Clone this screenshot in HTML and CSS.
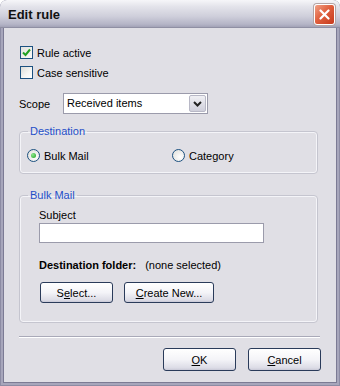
FILE: index.html
```html
<!DOCTYPE html>
<html lang="en">
<head>
<meta charset="UTF-8">
<meta name="viewport" content="width=device-width, initial-scale=1.0">
<title>Edit rule</title>
<link rel="stylesheet" href="styles.css">
</head>

<body>
<div class="window">
    <div class="titlebar">
        <span class="title">Edit rule</span>
        <button class="close" title="Close">
            <svg width="11" height="11" viewBox="0 0 11 11">
                <path d="M1.5 1.5 L9.5 9.5 M9.5 1.5 L1.5 9.5" stroke="#fff" stroke-width="2.2" stroke-linecap="round"/>
            </svg>
        </button>
    </div>

    <div class="client">
        <label class="check">
            <span class="box checked">
                <svg width="9" height="9" viewBox="0 0 9 9">
                    <path d="M1 4.5 L3.5 7 L8 1.5" fill="none" stroke="#21a121" stroke-width="2"/>
                </svg>
            </span>
            Rule active
        </label>
        <label class="check">
            <span class="box"></span>
            Case sensitive
        </label>

        <div class="scope">
            <span class="scope-label">Scope</span>
            <div class="combo">
                <span class="combo-text">Received items</span>
                <span class="combo-btn">
                    <svg width="9" height="6" viewBox="0 0 9 6">
                        <path d="M1 1 L4.5 4.5 L8 1" fill="none" stroke="#222" stroke-width="2"/>
                    </svg>
                </span>
            </div>
        </div>

        <fieldset class="group dest">
            <legend>Destination</legend>
            <div class="radios">
                <label class="radio"><span class="dot on"></span>Bulk Mail</label>
                <label class="radio"><span class="dot"></span>Category</label>
            </div>
        </fieldset>

        <fieldset class="group bulk">
            <legend>Bulk Mail</legend>
            <div class="field-label">Subject</div>
            <div class="textbox"></div>
            <div class="folder">
                <b>Destination folder:</b>
                <span>(none selected)</span>
            </div>
            <div class="buttons">
                <button class="btn">S<u>e</u>lect...</button>
                <button class="btn btn-wide"><u>C</u>reate New...</button>
            </div>
        </fieldset>

        <div class="separator"></div>

        <div class="footer">
            <button class="btn btn-dlg"><u>O</u>K</button>
            <button class="btn btn-dlg"><u>C</u>ancel</button>
        </div>
    </div>
</div>
</body>
</html>
```

FILE: styles.css
```css
body {
    margin: 0;
    background: #fff;
    font-family: "Liberation Sans", Arial, sans-serif;
    font-size: 11px;
    color: #000;
}
.window {
    width: 340px;
    height: 386px;
    box-sizing: border-box;
    display: flex;
    flex-direction: column;
    border-radius: 7px 7px 0 0;
    overflow: hidden;
    background: #a7a6bb;
    padding: 0 3px 3px 3px;
    box-shadow: inset 0 0 0 1px #8d8ca4;
}
.titlebar {
    height: 28px;
    margin: 0 -3px;
    padding: 0 5px 0 8px;
    display: flex;
    align-items: center;
    justify-content: space-between;
    background: linear-gradient(#f6f6f9, #e3e3ea 25%, #cfcfdb 60%, #b4b4c6 90%, #a2a2b6);
    border-bottom: 1px solid #8f8fa3;
    box-sizing: border-box;
}
.title {
    font-size: 13px;
    font-weight: bold;
    color: #111;
    margin-top: 2px;
}
.close {
    width: 21px;
    height: 21px;
    padding: 0;
    border: 1px solid #fff;
    border-radius: 3px;
    background: linear-gradient(135deg, #f1a186, #e0603e 45%, #c63a1c);
    display: flex;
    align-items: center;
    justify-content: center;
    box-shadow: 0 0 0 1px #b4a4a4;
    margin-top: 1px;
}
.client {
    flex: 1;
    background: #e0dfe5;
    padding: 18px 18px 0 15px;
    border-left: 1px solid #7c7b94;
    border-right: 1px solid #7c7b94;
    border-bottom: 1px solid #7c7b94;
}
.check {
    display: flex;
    align-items: center;
    gap: 4px;
    height: 13px;
    margin-bottom: 7px;
    margin-left: 1px;
}
.box {
    width: 11px;
    height: 11px;
    border: 1px solid #1c5180;
    background: linear-gradient(135deg, #dcdcd7, #f7f7f5 60%, #fff);
    display: flex;
    align-items: center;
    justify-content: center;
}
.box.checked {
    background: linear-gradient(135deg, #e2e2dd, #fafaf8);
}
.scope {
    display: flex;
    align-items: center;
    margin-top: 14px;
}
.scope-label {
    width: 44px;
}
.combo {
    display: flex;
    width: 143px;
    height: 19px;
    border: 1px solid #9b9bab;
    background: #fff;
}
.combo-text {
    flex: 1;
    padding-left: 3px;
    line-height: 19px;
}
.combo-btn {
    width: 15px;
    margin: 1px;
    border: 1px solid #b8b8c6;
    border-radius: 2px;
    background: linear-gradient(#f0f0f4, #cfcfdb);
    display: flex;
    align-items: center;
    justify-content: center;
}
.group {
    margin: 0;
    padding: 0 7px;
    border: 1px solid #c5c5cf;
    border-radius: 4px;
    box-shadow: inset 0 0 0 1px #f4f4f8;
}
.group legend {
    color: #1f4fc8;
    padding: 0 2px;
    line-height: 14px;
    margin-left: 1px;
}
.dest {
    margin-top: 10px;
    padding-top: 11px;
    padding-bottom: 11px;
}
.radios {
    display: grid;
    grid-template-columns: 145px 1fr;
}
.radio {
    display: flex;
    align-items: center;
    gap: 4px;
    height: 13px;
}
.dot {
    width: 11px;
    height: 11px;
    border: 1px solid #1c5180;
    border-radius: 50%;
    background: radial-gradient(circle at 65% 65%, #fff, #dcdcd7);
    display: flex;
    align-items: center;
    justify-content: center;
}
.dot.on::after {
    content: "";
    width: 5px;
    height: 5px;
    border-radius: 50%;
    background: radial-gradient(circle at 35% 35%, #8ee88e, #21a121);
}
.bulk {
    margin-top: 14px;
    padding: 7px 19px 19px 19px;
}
.bulk legend {
    margin-left: -11px;
}
.field-label {
    line-height: 13px;
    margin-bottom: 1px;
}
.textbox {
    width: 223px;
    height: 18px;
    border: 1px solid #9b9bab;
    background: #fff;
}
.folder {
    margin-top: 16px;
    line-height: 13px;
    display: flex;
    gap: 9px;
}
.buttons {
    display: flex;
    gap: 11px;
    margin-top: 10px;
    margin-left: 1px;
}
.btn {
    font-family: "Liberation Sans", Arial, sans-serif;
    font-size: 11px;
    color: #000;
    height: 21px;
    width: 73px;
    padding: 0;
    border: 1px solid #2a3b5a;
    border-radius: 3px;
    background: linear-gradient(#fff, #f4f4f8 50%, #dcdce6 90%, #c8c8d6);
}
.btn-wide {
    width: 90px;
}
.separator {
    margin-top: 13px;
    margin-right: -2px;
    border-top: 1px solid #a9a9b8;
    border-bottom: 1px solid #fff;
}
.footer {
    display: flex;
    justify-content: flex-end;
    gap: 12px;
    margin-top: 10px;
    margin-right: -3px;
}
.btn-dlg {
    height: 23px;
}
```
